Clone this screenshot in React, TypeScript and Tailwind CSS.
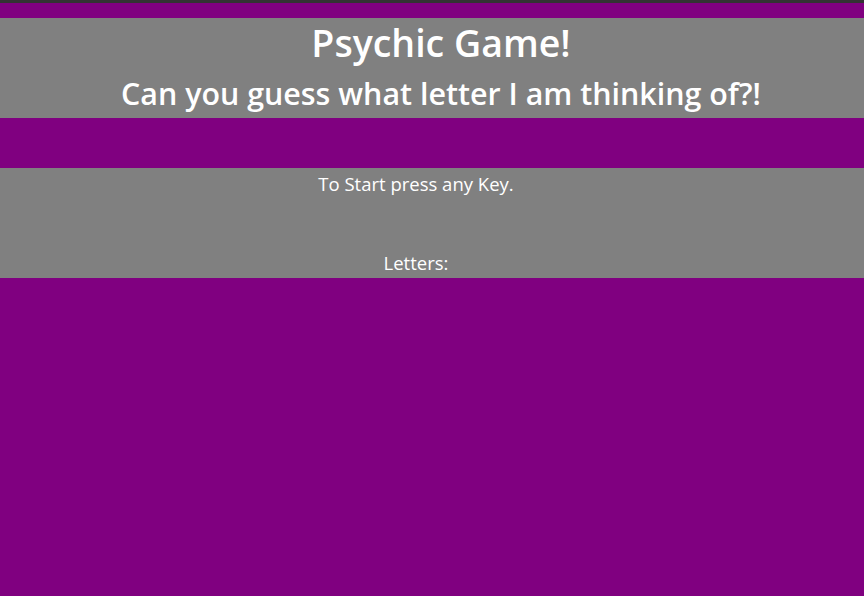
import React from 'react';

const App: React.FC = () => {
  return (
    <div className="min-h-[596px] bg-[#800080] font-['Open_Sans',sans-serif] text-white">
      <div className="h-[3px] bg-[#333333]" />
      <div className="h-[15px]" />
      <header className="h-[100px] bg-[#808080] pl-[18px] text-center">
        <h1 className="pt-[2px] text-[37.5px] font-semibold leading-[46px]">Psychic Game!</h1>
        <h2 className="mt-[8px] text-[30.4px] font-semibold leading-[40px]">
          Can you guess what letter I am thinking of?!
        </h2>
      </header>
      <div className="h-[50px]" />
      <section className="flex h-[110px] flex-col items-center bg-[#808080] pr-[32px] text-[18.5px]">
        <p className="pt-[4px] leading-[24px]">To Start press any Key.</p>
        <p className="mt-auto pb-[3px] leading-[24px]">Letters:</p>
      </section>
    </div>
  );
};

export default App;
